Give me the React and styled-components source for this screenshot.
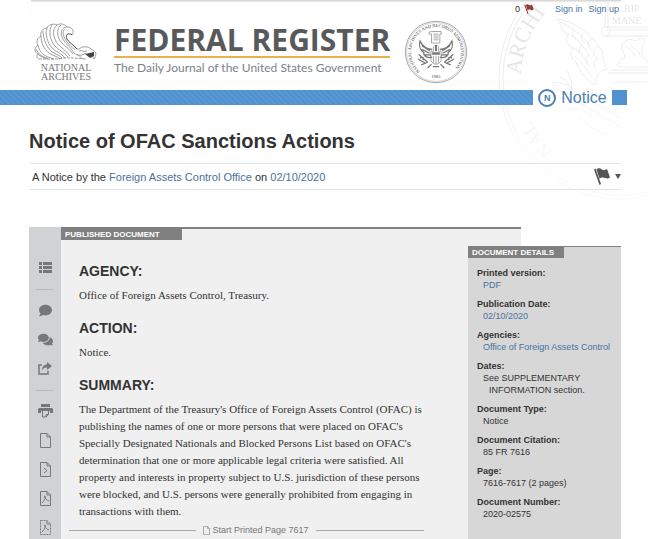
import React from 'react';
import styled, { createGlobalStyle } from 'styled-components';
import { FaComment, FaComments } from 'react-icons/fa';

const sans = '"Liberation Sans", Arial, sans-serif';

export default function App() {
  return (
    <Page>
      <GlobalStyle />
      <SealWatermark />
      <UserBar>
        <ClipCount type="button" aria-label="Clipped documents">
          0 <WavingFlag width="10" height="10" color="#93403c" />
        </ClipCount>
        <Link href="#sign-in">Sign in</Link>
        <Link href="#sign-up">Sign up</Link>
      </UserBar>
      <Masthead>
        <Archives>
          <EagleLogo />
          <span>NATIONAL</span>
          <span>ARCHIVES</span>
        </Archives>
        <Brand>
          <BrandName>FEDERAL REGISTER</BrandName>
          <Tagline>The Daily Journal of the United States Government</Tagline>
        </Brand>
        <Seal />
      </Masthead>
      <Band>
        <Stripe />
        <DocType>
          <TypeBadge>N</TypeBadge>
          Notice
        </DocType>
        <BandEnd />
      </Band>
      <Content>
        <Title>Notice of OFAC Sanctions Actions</Title>
        <Byline>
          <span>
            A Notice by the <Link href="#agency">Foreign Assets Control Office</Link> on{' '}
            <Link href="#date">02/10/2020</Link>
          </span>
          <ClipButton type="button" aria-label="Clip this document">
            <WavingFlag width="16" height="17" color="#555" />
            <Caret />
          </ClipButton>
        </Byline>
        <Columns>
          <Document>
            <Toolbar />
            <Article>
              <Tab $end="22px">PUBLISHED DOCUMENT</Tab>
              <Body>
                <Heading>AGENCY:</Heading>
                <Text>Office of Foreign Assets Control, Treasury.</Text>
                <Heading>ACTION:</Heading>
                <Text>Notice.</Text>
                <Heading>SUMMARY:</Heading>
                <Text>
                  The Department of the Treasury's Office of Foreign Assets Control (OFAC) is
                  publishing the names of one or more persons that were placed on OFAC's Specially
                  Designated Nationals and Blocked Persons List based on OFAC's determination that
                  one or more applicable legal criteria were satisfied. All property and interests
                  in property subject to U.S. jurisdiction of these persons were blocked, and U.S.
                  persons were generally prohibited from engaging in transactions with them.
                </Text>
              </Body>
              <PageBreak>
                <PageIcon width="7" height="9" />
                Start Printed Page 7617
              </PageBreak>
            </Article>
          </Document>
          <Details />
        </Columns>
      </Content>
    </Page>
  );
}

const details = [
  { term: 'Printed version:', value: 'PDF', href: '#pdf' },
  { term: 'Publication Date:', value: '02/10/2020', href: '#date' },
  { term: 'Agencies:', value: 'Office of Foreign Assets Control', href: '#agency' },
  { term: 'Dates:', value: 'See SUPPLEMENTARY INFORMATION section.' },
  { term: 'Document Type:', value: 'Notice' },
  { term: 'Document Citation:', value: '85 FR 7616' },
  { term: 'Page:', value: '7616-7617 (2 pages)' },
  { term: 'Document Number:', value: '2020-02575' },
];

function Details() {
  return (
    <Sidebar>
      <Tab $end="10px">DOCUMENT DETAILS</Tab>
      <DetailList>
        {details.map(({ term, value, href }) => (
          <React.Fragment key={term}>
            <Term>{term}</Term>
            <Value>{href ? <Link href={href}>{value}</Link> : value}</Value>
          </React.Fragment>
        ))}
      </DetailList>
    </Sidebar>
  );
}

function Toolbar() {
  return (
    <Tools>
      <Tool aria-label="Table of contents"><ListIcon /></Tool>
      <Divider />
      <Tool aria-label="Comment"><FaComment size={13} /></Tool>
      <Tool aria-label="Public comments"><FaComments size={15} /></Tool>
      <Tool aria-label="Share"><ShareIcon /></Tool>
      <Divider />
      <Tool aria-label="Print"><PrintIcon /></Tool>
      <Tool aria-label="Document"><PageIcon width="11" height="15" /></Tool>
      <Tool aria-label="Developer tools">
        <PageIcon width="11" height="15"><path d="M4 6l3 2.500l-3 2.500" /></PageIcon>
      </Tool>
      <Tool aria-label="Official PDF">
        <PageIcon width="11" height="15"><path d="M2 12c3-3 4-6 3-7s-1 3 4 5" /></PageIcon>
      </Tool>
      <Tool aria-label="Public inspection PDF">
        <PageIcon width="11" height="15" dashed><path d="M2 12c3-3 4-6 3-7s-1 3 4 5" /></PageIcon>
      </Tool>
    </Tools>
  );
}

/* Icons
   ========================================================================== */
function WavingFlag({ width, height, color }) {
  return (
    <svg width={width} height={height} viewBox="0 0 16 17" fill={color} aria-hidden="true">
      <path d="M0 1.500L1.500 .5L7 16L5.500 17z" />
      <path d="M2.500 1.500C5-.5 6 .5 8 1.500S11 2 13 1L16 9.500C14 11 12.500 10.500 11 10S8 9 5.500 10.500z" />
    </svg>
  );
}

function ListIcon() {
  return (
    <svg width="13" height="11" viewBox="0 0 13 11" fill="currentColor" aria-hidden="true">
      <path d="M0 0h3v3H0zM4 0h9v3H4zM0 4h3v3H0zM4 4h9v3H4zM0 8h3v3H0zM4 8h9v3H4z" />
    </svg>
  );
}

function PrintIcon() {
  return (
    <svg width="15" height="14" viewBox="0 0 15 14" fill="currentColor" aria-hidden="true">
      <path d="M3 0h9v3H3z" />
      <path d="M1 4h13l1 1v4h-3V7H3v2H0V5z" />
      <path d="M4.500 7v6H8l2.500-2.500V7M8 13v-2.500h2.500" fill="none" stroke="currentColor" />
    </svg>
  );
}

function PageIcon({ width, height, dashed, children }) {
  return (
    <svg width={width} height={height} viewBox="0 0 11 15" fill="none" stroke="currentColor" aria-hidden="true">
      <path d="M.5.5h6.500l3.500 3.500v10.500h-10z" strokeDasharray={dashed ? '2 1' : undefined} />
      <path d="M7 .5v3.500h3.500" />
      {children}
    </svg>
  );
}

function ShareIcon() {
  return (
    <svg width="14" height="13" viewBox="0 0 14 13" aria-hidden="true">
      <path d="M4 3H1v9h9V9" fill="none" stroke="currentColor" strokeWidth="1.500" />
      <path d="M9 0l5 4l-5 4V5.500C6 5.500 5 6.500 4 8.500C4 5 6 2.500 9 2.500z" fill="currentColor" />
    </svg>
  );
}

function EagleLogo() {
  return (
    <svg width="64" height="40" viewBox="0 0 64 40" fill="none" stroke="#777" strokeWidth=".7" aria-hidden="true">
      <path d="M38 12C41 8 38 4 33 4C31 1 26 0 23 2C19 0 14 2 13 5C9 5 6 9 7 13C3 15 2 19 4 22C0 25 0 29 4 31C2 33 3 35 5 36" />
      <path d="M38 12C34 9 31 12 33 16C35 20 39 21 43 26" stroke="#444" strokeWidth="1" />
      <path d="M33 4C28 4 26 9 28 14C30 20 36 23 40 30M31 6C27 9 29 17 41 27" />
      <path d="M23 2C18 6 19 14 23 20C27 25 32 27 36 33M27 2C22 6 23 14 27 19C31 24 36 26 39 31" />
      <path d="M13 5C11 11 13 19 18 25C22 29 27 30 31 35M18 2C14 8 16 16 20 22C24 27 30 29 34 34" />
      <path d="M7 13C7 20 10 26 15 30C19 33 23 33 26 36M9 8C9 15 12 23 17 28C21 31 25 32 28 35" />
      <path d="M4 22C5 28 9 32 14 34L20 36M4 31C7 34 10 35 14 36M2 26C5 32 9 34 13 35" />
      <path d="M5 36H14C24 37 30 34 38 35L52 36" strokeDasharray="3 1" />
      <path d="M43 26C46 27 46 24 49 24C53 23 57 25 62 30C62 32 61 34 60 36C59 34 58 33 56 32M40 30C43 33 48 33 52 30M45 28C48 27 50 29 53 28M43 31L49 36" />
      <path d="M51 31L60 29L60 33L56 35z" fill="#444" stroke="none" />
    </svg>
  );
}

function SealArt() {
  return (
    <g fill="none" stroke="currentColor">
      <circle cx="50" cy="50" r="48" />
      <circle cx="50" cy="50" r="46" strokeWidth=".5" />
      <path d="M43 18h15v4h-2v14H43V22h-4v-3zM46 22h8M46 25h8M46 28h8M46 31h8" />
      <path d="M44 46C36 46 29 41 25 33C23 41 26 48 31 51C30 57 38 60 44 58M28 40l12 8M28 46l12 6M33 54l9 1M56 46C64 46 71 41 75 33C77 41 74 48 69 51C70 57 62 60 56 58M72 40l-12 8M72 46l-12 6M67 54l-9 1" strokeWidth="2" />
      <path d="M46 44c0-7 9-6 8 0v5h4v14c-3 8-13 8-16 0V49h4zM43 54h14M46 56v11M50 56v13M54 56v11" />
      <path d="M50 39v10M44 52h12" strokeWidth="3" />
      <path d="M37 66L23 54M34 68l-12-7M37 66l-10 4M26 55v5M30 58v5M63 66l14-12M66 68l12-7M63 66l10 4M74 55v5M70 58v5M43 69l-6 6M57 69l6 6M45 73h10" strokeWidth="2" />
    </g>
  );
}

function Seal() {
  return (
    <SealSvg viewBox="0 0 100 100" aria-label="National Archives and Records Administration seal">
      <SealArt />
      <path id="seal-ring" d="M25 80A39 39 0 1 1 75 80" fill="none" />
      <SealText>
        <textPath href="#seal-ring">NATIONAL ARCHIVES AND RECORDS ADMINISTRATION</textPath>
      </SealText>
      <SealText x="50" y="91" textAnchor="middle">1985</SealText>
    </SealSvg>
  );
}

function SealWatermark() {
  return (
    <Watermark viewBox="0 0 250 250" aria-hidden="true">
      <g fill="none" stroke="currentColor">
        <circle cx="125" cy="125" r="121" />
        <circle cx="125" cy="125" r="117" />
        <path d="M110 40v34M113 40v34M155 74h-46c-3 0-3 9 0 9h46M111 77h44M112 74c4 2 4 7 0 9" />
        <path d="M115 117h40M113 120h42M117 129h38M124 114c-4-2 0-6 4-8s0-6-1-9 0-8 5-10 8 2 10 0 7-3 8 1-4 3-3 7-3 8 2 11 5 5 4 8zM130 92c4 5 8 6 10 12M134 90c3 5 9 6 11 12" />
        <path d="M62 66C78 68 98 80 108 100C107 106 110 112 112 116C106 117 101 122 100 132C92 128 85 119 81 109C74 104 75 98 78 96C71 91 70 86 73 83C67 78 66 72 62 66z" />
        <path d="M65 69C76 74 88 82 96 94M72 80C82 86 89 93 94 102M77 94C85 98 90 105 93 112M80 104C88 109 92 118 97 124M90 80c-6 3-4 8 0 10M97 86c-6 3-5 8 0 11M103 94c-7 3-5 9 0 12M88 92c-6 3-4 8 0 11M95 101c-6 4-4 9 0 12M103 106c-6 3-4 9-1 12M80 76c-5 2-3 7 1 9" />
        <path d="M57 130c11-2 19 3 25 11c-11 1-19-2-25-11zM65 124c8 4 11 9 10 14M63 146c10-3 20 1 26 9M73 157c8-3 17-1 24 6M72 118c5 8 6 16 3 24" />
        <path d="M85 150l41 24M90 144l37 22M96 139l30 18M84 163c8 10 19 17 31 19" />
      </g>
      <path id="mark-ring" d="M26 122A99 99 0 0 1 125 26" fill="none" />
      <WatermarkText $size="22px"><textPath href="#mark-ring">ARCHI</textPath></WatermarkText>
      <path id="mark-low" d="M58 198A99 99 0 0 1 34 162" fill="none" />
      <WatermarkText $size="18px"><textPath href="#mark-low">NAL</textPath></WatermarkText>
      <WatermarkText $size="10px" x="129" y="59">RIP</WatermarkText>
      <WatermarkText $size="10px" x="117" y="71">MANE</WatermarkText>
    </Watermark>
  );
}

/* Styled components
   ========================================================================== */
const GlobalStyle = createGlobalStyle`
  * { box-sizing: border-box; }
  body { margin: 0; background: #fff; font-family: ${sans}; color: #333; }
  button { border: 0; padding: 0; background: none; font: inherit; color: inherit; }
`;

const Page = styled.div`
  position: relative;
  display: flex;
  flex-direction: column;
  min-height: 100vh;
  overflow: hidden;
`;

const Watermark = styled.svg`
  position: absolute;
  z-index: -1;
  top: -47px;
  right: -97px;
  width: 250px;
  height: 250px;
  color: #ececec;
  mask-image: linear-gradient(#000 50%, rgba(0, 0, 0, 0.3) 75%);
`;

const WatermarkText = styled.text`
  font-family: "Liberation Serif", serif;
  font-size: ${({ $size }) => $size};
  fill: #e6e6e6;
`;

const UserBar = styled.nav`
  display: flex;
  align-items: center;
  justify-content: flex-end;
  gap: 6px;
  height: 17px;
  margin: 0 27px 0 31px;
  padding: 0 2px 0 0;
  border-top: 1px solid #d8d8d8;
  box-shadow: inset 0 1px 1px #e8e8e8;
  font-size: 9px;
`;

const ClipCount = styled.button`
  display: flex;
  align-items: center;
  gap: 4px;
  margin-right: 15px;
`;

const Link = styled.a`
  color: #48729c;
  text-decoration: none;
`;

const Masthead = styled.header`
  display: flex;
  align-items: flex-start;
  height: 73px;
  padding: 3px 34px 0;
`;

const Archives = styled.div`
  display: flex;
  flex-direction: column;
  align-items: center;
  width: 64px;
  padding-top: 3px;
  font-family: "Liberation Serif", serif;
  font-size: 10px;
  line-height: 9px;
  color: #777;
`;

const Brand = styled.div`
  margin-left: 16px;
  padding-top: 4px;
  white-space: nowrap;
`;

const BrandName = styled.div`
  border-bottom: 2px solid #e9b04d;
  font-family: "Open Sans", sans-serif;
  font-weight: 700;
  font-size: 30px;
  line-height: 32px;
  color: #58595b;
`;

const Tagline = styled.div`
  font-family: Lato, sans-serif;
  font-size: 12px;
  line-height: 20px;
  color: #7a8288;
`;

const SealSvg = styled.svg`
  width: 64px;
  height: 64px;
  margin-left: 14px;
  color: #777;
`;

const SealText = styled.text`
  font-family: "Liberation Serif", serif;
  font-size: 7px;
  fill: #444;
`;

const Band = styled.div`
  display: flex;
  height: 15px;
`;

const Stripe = styled.div`
  flex: 1;
  background: repeating-linear-gradient(45deg, #4f92cf 0 2px, #5797d2 2px 4px);
`;

const BandEnd = styled.div`
  width: 15px;
  margin-right: 21px;
  background: #4f92cf;
`;

const DocType = styled.div`
  display: flex;
  align-items: center;
  justify-content: center;
  gap: 5px;
  width: 79px;
  font-size: 16px;
  color: #4b7fae;
`;

const TypeBadge = styled.span`
  display: flex;
  align-items: center;
  justify-content: center;
  width: 18px;
  height: 18px;
  border: 2px solid #4b7fae;
  border-radius: 50%;
  font-size: 9px;
  font-weight: 700;
`;

const Content = styled.main`
  display: flex;
  flex: 1;
  flex-direction: column;
  padding: 24px 27px 0 29px;
`;

const Title = styled.h1`
  margin: 0 0 10px;
  font-size: 20px;
  line-height: 24px;
`;

const Byline = styled.div`
  display: flex;
  align-items: center;
  justify-content: space-between;
  height: 27px;
  padding: 0 0 0 3px;
  border: solid #dfe5e8;
  border-width: 1px 0;
  font-size: 11px;
`;

const ClipButton = styled.button`
  display: flex;
  align-items: center;
  gap: 5px;
`;

const Caret = styled.span`
  border: 3px solid transparent;
  border-top: 5px solid #555;
  border-bottom: 0;
`;

const Columns = styled.div`
  display: grid;
  flex: 1;
  grid-template-columns: 1fr 53px 100px;
  margin-top: 37px;
`;

const Document = styled.div`
  display: flex;
  grid-area: 1 / 1 / 2 / 3;
  background: #f0f0f0;
`;

const Tools = styled.div`
  display: flex;
  flex-direction: column;
  align-items: center;
  gap: 9px;
  width: 32px;
  padding-top: 30px;
  background: #d0d2d4;
`;

const Tool = styled.button`
  display: flex;
  align-items: center;
  justify-content: center;
  height: 20px;
  color: #777;
`;

const Divider = styled.div`
  width: 18px;
  height: 1px;
  margin: 3px 0 1px;
  background: #b9bbbd;
`;

const Article = styled.article`
  flex: 1;
  border-top: 2px solid #808080;
`;

const Tab = styled.div`
  width: max-content;
  padding: 0 ${({ $end }) => $end} 0 4px;
  background: #808080;
  font-size: 8px;
  font-weight: 700;
  line-height: 11px;
  color: #fff;
`;

const Body = styled.div`
  padding: 22px 96px 0 18px;
`;

const Heading = styled.h2`
  margin: 0 0 7px;
  font-size: 14px;
  line-height: 18px;
`;

const Text = styled.p`
  margin: 0 0 15px;
  font-family: "Liberation Serif", serif;
  font-size: 11px;
  line-height: 17px;

  &:last-child {
    margin-bottom: 3px;
  }
`;

const PageBreak = styled.div`
  display: flex;
  align-items: center;
  gap: 3px;
  margin: 0 97px 0 8px;
  font-size: 9px;
  line-height: 14px;
  color: #777;

  &::before,
  &::after {
    content: '';
    flex: 7;
    height: 1px;
    margin-right: 4px;
    background: #aaa;
  }

  &::after {
    flex: 6;
    margin: 0 0 0 4px;
  }
`;

const Sidebar = styled.aside`
  grid-area: 1 / 2 / 2 / 4;
  margin-top: 19px;
  border-top: 1px solid #808080;
  background: #d7d7d7;
`;

const DetailList = styled.dl`
  margin: 0;
  padding: 9px 10px 0 9px;
  font-size: 9px;
  line-height: 12px;
`;

const Term = styled.dt`
  font-weight: 700;
`;

const Value = styled.dd`
  margin: 0 0 7px 6px;
  padding-left: 6px;
  text-indent: -6px;
`;
